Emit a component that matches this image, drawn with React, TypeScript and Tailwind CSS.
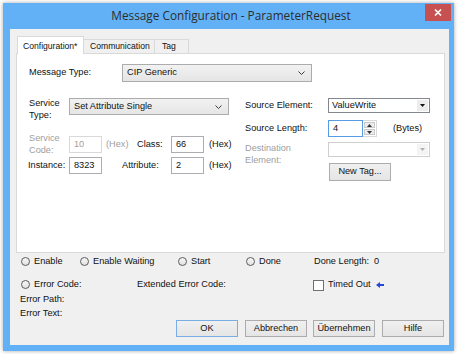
import React from 'react';

function Chevron({ color = '#3c3c3c' }: { color?: string }) {
  return (
    <svg width="7" height="4" viewBox="0 0 7 4">
      <path d="M0.5 0.5 L3.5 3.5 L6.5 0.5" fill="none" stroke={color} strokeWidth="1" />
    </svg>
  );
}

function Tri({ color, up }: { color: string; up?: boolean }) {
  return (
    <svg width="5" height="3" viewBox="0 0 5 3">
      <path d={up ? 'M0 3 H5 L2.5 0 Z' : 'M0 0 H5 L2.5 3 Z'} fill={color} />
    </svg>
  );
}

function Radio() {
  return (
    <span className="h-[9px] w-[9px] shrink-0 rounded-full border border-[#5c5c5c] bg-linear-to-b from-[#f7f7f7] to-[#e2e2e2]" />
  );
}

function Win8Select({ value, className }: { value: string; className: string }) {
  return (
    <div
      className={`flex items-center justify-between border border-[#acacac] bg-linear-to-b from-[#f2f2f2] to-[#e5e5e5] pl-[4px] pr-[6px] ${className}`}
    >
      <span>{value}</span>
      <Chevron />
    </div>
  );
}

function TextBox({ value, disabled }: { value: string; disabled?: boolean }) {
  return (
    <div
      className={`flex h-[17px] w-[33px] items-center border bg-white pl-[4px] ${
        disabled ? 'border-[#d9d9d9] text-[#a0a0a0]' : 'border-[#abadb3]'
      }`}
    >
      {value}
    </div>
  );
}

function Button({ label, primary }: { label: string; primary?: boolean }) {
  return (
    <div
      className={`flex h-[17px] w-[62px] items-center justify-center border bg-linear-to-b from-[#f0f0f0] to-[#e5e5e5] ${
        primary ? 'border-[#78aee5]' : 'border-[#acacac]'
      }`}
    >
      {label}
    </div>
  );
}

export default function App() {
  return (
    <div className="h-[354px] w-[461px] overflow-hidden bg-white pl-[3px] pt-[3px] font-['Liberation_Sans',Arial,sans-serif] text-[9.2px] leading-none text-[#111]">
      <div className="flex h-[348px] w-[451px] flex-col bg-[#62b1f6] shadow-[0_0_4px_rgba(0,0,0,0.35)]">
        {/* Title bar */}
        <div className="relative flex h-[26px] shrink-0 items-center justify-center pl-[5px]">
          <span className="font-['Open_Sans',sans-serif] text-[11.8px] text-[#2d2d2d]">
            Message Configuration - ParameterRequest
          </span>
          <div className="absolute right-[3px] top-px flex h-[17px] w-[26px] items-center justify-center bg-[#c75050]">
            <svg width="8" height="7" viewBox="0 0 8 7">
              <path d="M1 0.5 L7 6.5 M7 0.5 L1 6.5" stroke="white" strokeWidth="1.6" />
            </svg>
          </div>
        </div>

        {/* Client area */}
        <div className="mb-[6px] ml-[7px] mr-[5px] flex flex-1 flex-col bg-[#f0f0f0]">
          {/* Tabs */}
          <div className="ml-[6px] mt-[7px] flex h-[17px] items-end pl-px text-[8.6px]">
            <div className="relative z-10 -mb-px flex h-[18px] w-[67px] items-start border border-b-0 border-[#d9d9d9] bg-white pl-[5px] pt-[5px]">
              Configuration*
            </div>
            <div className="-ml-px flex h-[14px] w-[72px] items-center border border-b-0 border-[#d9d9d9] bg-[#f0f0f0] pl-[6px]">
              Communication
            </div>
            <div className="-ml-px flex h-[14px] w-[35px] items-center border border-b-0 border-[#d9d9d9] bg-[#f0f0f0] pl-[7px]">
              Tag
            </div>
          </div>

          {/* Tab panel */}
          <div className="ml-[6px] h-[200px] w-[429px] border border-[#d9d9d9] bg-white">
            <div className="ml-[12px] mt-[10px] flex h-[18px] items-center">
              <span className="w-[93px]">Message Type:</span>
              <Win8Select value="CIP Generic" className="h-[18px] w-[190px]" />
            </div>

            <div className="ml-[12px] mt-[16px] flex">
              {/* Left column */}
              <div className="flex w-[216px] flex-col">
                <div className="flex h-[17px] items-start">
                  <span className="-mt-px w-[40px] leading-[12px]">
                    Service
                    <br />
                    Type:
                  </span>
                  <Win8Select value="Set Attribute Single" className="h-[17px] w-[160px]" />
                </div>

                <div className="mt-[21px] flex h-[17px] items-center">
                  <span className="w-[40px] leading-[11.5px] text-[#a0a0a0]">
                    Service
                    <br />
                    Code:
                  </span>
                  <TextBox value="10" disabled />
                  <span className="w-[35px] pl-[4px] text-[#a0a0a0]">(Hex)</span>
                  <span className="w-[34px]">Class:</span>
                  <TextBox value="66" />
                  <span className="pl-[5px]">(Hex)</span>
                </div>

                <div className="mt-[4px] flex h-[17px] items-center">
                  <span className="-ml-px w-[41px]">Instance:</span>
                  <TextBox value="8323" />
                  <span className="w-[20px]" />
                  <span className="w-[49px]">Attribute:</span>
                  <TextBox value="2" />
                  <span className="pl-[5px]">(Hex)</span>
                </div>
              </div>

              {/* Right column */}
              <div className="flex flex-col">
                <div className="flex h-[15px] items-center">
                  <span className="w-[83px]">Source Element:</span>
                  <div className="flex h-[15px] w-[102px] border border-[#828790] bg-white">
                    <span className="flex flex-1 items-center pl-[3px]">ValueWrite</span>
                    <span className="m-px flex w-[11px] items-center justify-center bg-[#ececec]">
                      <Tri color="#111" />
                    </span>
                  </div>
                </div>

                <div className="mt-[7px] flex h-[17px] items-center">
                  <span className="w-[83px]">Source Length:</span>
                  <div className="flex h-[17px] w-[35px] items-center border border-[#569de5] bg-white pl-[4px]">
                    4
                  </div>
                  <div className="flex h-[17px] w-[14px] flex-col gap-px border-y border-r border-[#d9d9d9] bg-white p-px">
                    <span className="flex flex-1 items-center justify-center border border-[#c9c9c9] bg-[#ececec]">
                      <Tri color="#333" up />
                    </span>
                    <span className="flex flex-1 items-center justify-center border border-[#c9c9c9] bg-[#ececec]">
                      <Tri color="#333" />
                    </span>
                  </div>
                  <span className="ml-[16px]">(Bytes)</span>
                </div>

                <div className="mt-[5px] flex h-[15px] items-start">
                  <span className="w-[83px] leading-[12px] text-[#a0a0a0]">
                    Destination
                    <br />
                    Element:
                  </span>
                  <div className="flex h-[15px] w-[102px] border border-[#cfcfcf] bg-white">
                    <span className="flex-1" />
                    <span className="m-px flex w-[11px] items-center justify-center bg-[#f4f4f4]">
                      <Tri color="#b0b0b0" />
                    </span>
                  </div>
                </div>

                <div className="ml-[84px] mt-[6px] flex h-[18px] w-[62px] items-center justify-center border border-[#acacac] bg-linear-to-b from-[#f0f0f0] to-[#e5e5e5]">
                  New Tag...
                </div>
              </div>
            </div>
          </div>

          {/* Status area */}
          <div className="mt-[3px] flex h-[12px] items-center pl-[11px]">
            <div className="flex w-[59px] items-center gap-[4px]">
              <Radio />
              <span>Enable</span>
            </div>
            <div className="flex w-[98px] items-center gap-[4px]">
              <Radio />
              <span>Enable Waiting</span>
            </div>
            <div className="flex w-[68px] items-center gap-[4px]">
              <Radio />
              <span>Start</span>
            </div>
            <div className="flex w-[68px] items-center gap-[4px]">
              <Radio />
              <span>Done</span>
            </div>
            <span className="w-[60px]">Done Length:</span>
            <span>0</span>
          </div>

          <div className="mt-[11px] flex h-[12px] items-center pl-[11px]">
            <div className="flex w-[116px] items-center gap-[4px]">
              <Radio />
              <span>Error Code:</span>
            </div>
            <span className="w-[176px]">Extended Error Code:</span>
            <span className="h-[11px] w-[11px] border border-[#707070] bg-white" />
            <span className="ml-[4px]">Timed Out</span>
            <svg className="ml-[5px]" width="8" height="6" viewBox="0 0 8 6">
              <path d="M0 3 L4 0 V2 H8 V4 H4 V6 Z" fill="#2447d8" />
            </svg>
          </div>

          <div className="mt-[3px] flex h-[12px] items-center pl-[10px]">Error Path:</div>
          <div className="mt-[2px] flex h-[12px] items-center pl-[10px]">Error Text:</div>

          <div className="flex pl-[166px]">
            <Button label="OK" primary />
            <div className="ml-[7px]">
              <Button label="Abbrechen" />
            </div>
            <div className="ml-[6px]">
              <Button label="Übernehmen" />
            </div>
            <div className="ml-[7px]">
              <Button label="Hilfe" />
            </div>
          </div>
        </div>
      </div>
    </div>
  );
}
